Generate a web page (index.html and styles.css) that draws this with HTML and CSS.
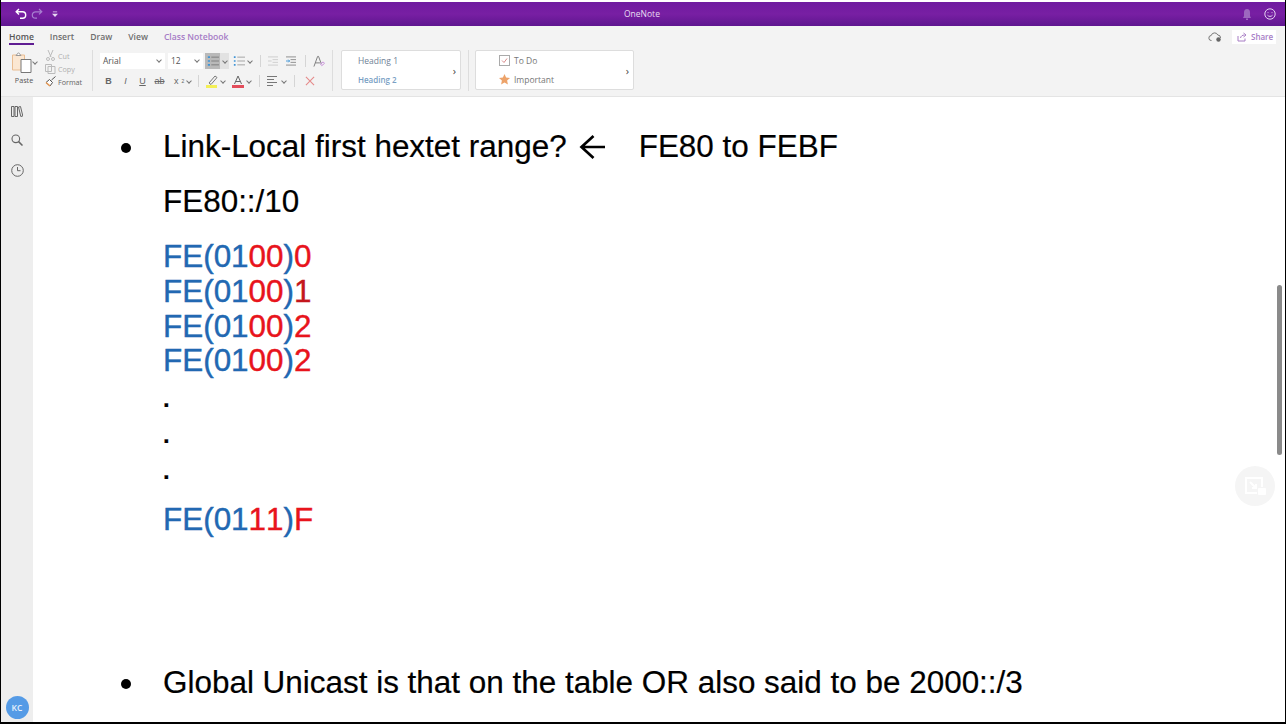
FILE: index.html
```html
<!DOCTYPE html>
<html lang="en">
<head>
    <meta charset="UTF-8">
    <title>OneNote</title>
    <link rel="stylesheet" href="styles.css">
</head>
<body>
    <div class="app">
        <header class="titlebar">
            <div class="quick">
                <svg width="12" height="12" viewBox="0 0 12 12" fill="none" stroke="#fff" stroke-width="1.4"><path d="M4 1 1.200 3.800 4 6.400M1.400 3.800H7.500a3.200 3.200 0 0 1 0 6.400H5"/></svg>
                <svg width="12" height="12" viewBox="0 0 12 12" fill="none" stroke="#a77fd0" stroke-width="1.2"><path d="M8 1l2.800 2.800L8 6.400M10.600 3.800H4.500a3.200 3.200 0 0 0 0 6.400H6"/></svg>
                <svg class="quick-more" width="6" height="7" viewBox="0 0 7 7" fill="#e6d8f2"><path d="M1 0h5v1H1zM0 2.500h7L3.500 6.500z"/></svg>
            </div>
            <div class="app-name">OneNote</div>
            <div class="title-right">
                <svg width="10" height="11" viewBox="0 0 10 11" fill="#9d68bf"><path d="M5 0C3 0 2 1.500 2 3.500V7L1 9h8L8 7V3.500C8 1.500 7 0 5 0zM4 9.500h2V11H4z"/></svg>
                <svg width="12" height="12" viewBox="0 0 12 12" fill="none" stroke="#e3d2ef" stroke-width="1"><circle cx="6" cy="6" r="5.200"/><path d="M3.500 7.200c1.200 1.600 3.800 1.600 5 0M4 4.300v.8M8 4.300v.8"/></svg>
            </div>
        </header>

        <div class="tabs">
            <nav class="tab-list">
                <span class="tab tab-active">Home</span>
                <span class="tab">Insert</span>
                <span class="tab">Draw</span>
                <span class="tab">View</span>
                <span class="tab tab-class">Class Notebook</span>
            </nav>
            <div class="tab-tools">
                <svg width="14" height="10" viewBox="0 0 14 10" fill="none" stroke="#777"><path d="M3.500 8.500a2.500 2.500 0 0 1-.3-5 3.500 3.500 0 0 1 6.600-.5 2.800 2.800 0 0 1 2.700 3"/><circle cx="10.500" cy="7.500" r="2.200" fill="#666" stroke="none"/></svg>
                <div class="share">
                    <svg width="10" height="10" viewBox="0 0 10 10" fill="none" stroke="#a77cc4"><path d="M1 4v5h7V6.500M3.500 6c.4-2 2-3 4-3M6.500 1l2.500 2-2.500 2"/></svg>
                    Share
                </div>
            </div>
        </div>

        <div class="ribbon">
            <section class="group group-clip">
                <div class="paste">
                    <div class="paste-top">
                        <svg width="20" height="21" viewBox="0 0 20 21" fill="none"><path d="M.5 3h12v15H.5z" fill="#fbe7d2" stroke="#e9bd92"/><path d="M4 3.500 6.500.7 9 3.500z" fill="#fff" stroke="#999"/><path d="M9 7.500h10v13H9z" fill="#fff" stroke="#777"/></svg>
                        <i class="caret"></i>
                    </div>
                    <span>Paste</span>
                </div>
                <div class="clip-list">
                    <div class="clip-item clip-off">
                        <svg width="11" height="11" viewBox="0 0 11 11" fill="none" stroke="#bbb"><path d="M3 0l3 7M8 0 5 7"/><circle cx="3" cy="9" r="1.500"/><circle cx="8" cy="9" r="1.500"/></svg>
                        Cut
                    </div>
                    <div class="clip-item clip-off">
                        <svg width="11" height="11" viewBox="0 0 11 11" fill="none" stroke="#bbb"><path d="M.5 1.500h6v7h-6zM3 3.500h7v7H3z"/></svg>
                        Copy
                    </div>
                    <div class="clip-item">
                        <svg width="11" height="11" viewBox="0 0 11 11" fill="none" stroke="#555"><path d="M6.500 4 10.500.500"/><path d="M1 6.500 4.500 3.500 7.500 6.500 5 10z" fill="#fff"/><path d="M1 6.500 5 10" stroke="#e89b55" stroke-width="1.500"/></svg>
                        Format
                    </div>
                </div>
            </section>

            <section class="group group-text">
                <div class="text-row">
                    <div class="select select-font">Arial<i class="caret"></i></div>
                    <div class="select select-size">12<i class="caret"></i></div>
                    <div class="btn-pair btn-pair-on">
                        <span class="list-btn btn-on">
                            <svg width="12" height="12" viewBox="0 0 14 12" fill="none" stroke="#777"><path d="M5 1.500h9M5 6h9M5 10.500h9"/><path d="M1 1.500h2.500M1 6h2.500M1 10.500h2.500" stroke="#3f94d6" stroke-width="2"/></svg>
                        </span>
                        <i class="caret"></i>
                    </div>
                    <div class="btn-pair">
                        <span class="list-btn list-btn-plain">
                            <svg width="12" height="12" viewBox="0 0 14 12" fill="none" stroke="#999"><path d="M5 1.500h9M5 6h9M5 10.500h9"/><path d="M1 1.500h2M1 6h2M1 10.500h2" stroke="#3f94d6" stroke-width="2"/></svg>
                        </span>
                        <i class="caret"></i>
                    </div>
                    <i class="thin-sep"></i>
                    <svg class="indent" width="10" height="10" viewBox="0 0 11 10" fill="none" stroke="#ccc"><path d="M0 .5h11M5 3.500h6M5 6.500h6M0 9.500h11M4 5H0"/></svg>
                    <svg class="indent" width="10" height="10" viewBox="0 0 11 10" fill="none" stroke="#888"><path d="M0 .5h11M5 3.500h6M5 6.500h6M0 9.500h11"/><path d="M0 5h4M2.500 3.500 4 5 2.500 6.500" stroke="#3f94d6"/></svg>
                    <i class="thin-sep"></i>
                    <svg width="12" height="13" viewBox="0 0 13 13" fill="none" stroke="#777"><path d="M1 12 5 1h1l3 8M2.500 8h5"/><path d="M8 9l3-2 1.500 1.500-3 2.500z" stroke="#c48ad8"/></svg>
                </div>
                <div class="text-row">
                    <b class="fmt">B</b>
                    <i class="fmt">I</i>
                    <u class="fmt">U</u>
                    <s class="fmt">ab</s>
                    <span class="fmt fmt-sub">x<sub>2</sub><i class="caret"></i></span>
                    <i class="thin-sep"></i>
                    <span class="color-btn">
                        <svg width="12" height="13" viewBox="0 0 12 13" fill="none" stroke="#777"><path d="M3 8l6-7 2 1.500L5 9.500z"/><path d="M0 11.500h11" stroke="#f3ef56" stroke-width="3"/></svg>
                        <i class="caret"></i>
                    </span>
                    <span class="color-btn">
                        <svg width="12" height="13" viewBox="0 0 12 13" fill="none" stroke="#666"><path d="M2.500 9 6 1l3.500 8M4 6.500h4"/><path d="M0 11.500h12" stroke="#e34d5b" stroke-width="3"/></svg>
                        <i class="caret"></i>
                    </span>
                    <i class="thin-sep"></i>
                    <span class="color-btn color-btn-wide">
                        <svg width="11" height="10" viewBox="0 0 11 10" fill="none" stroke="#777"><path d="M0 .5h10M0 3.500h7M0 6.500h10M0 9.500h6"/></svg>
                        <i class="caret"></i>
                    </span>
                    <i class="thin-sep"></i>
                    <svg class="del" width="10" height="10" viewBox="0 0 11 11" fill="none" stroke="#e58a8a" stroke-width="1.200"><path d="M1 1l9 9M10 1l-9 9"/></svg>
                </div>
            </section>

            <section class="style-box style-headings">
                <div class="style-lines">
                    <span class="h1-sample">Heading 1</span>
                    <span class="h2-sample">Heading 2</span>
                </div>
                <span class="chev">›</span>
            </section>
            <i class="group-sep"></i>
            <section class="style-box style-tags">
                <div class="style-lines">
                    <span class="tag-line">
                        <svg width="11" height="11" viewBox="0 0 11 11" fill="none"><rect x=".5" y=".5" width="10" height="10" stroke="#aaa"/><path d="M3 5.500l2 2 3-4" stroke="#d98a8a"/></svg>
                        To Do
                    </span>
                    <span class="tag-line">
                        <svg width="11" height="11" viewBox="0 0 11 11" fill="#eda36a"><path d="M5.500 0l1.600 3.600 3.900.4-2.900 2.600.8 3.900-3.400-2-3.400 2 .8-3.900L0 4l3.900-.4z"/></svg>
                        Important
                    </span>
                </div>
                <span class="chev">›</span>
            </section>
        </div>

        <div class="workspace">
            <aside class="sidebar">
                <div class="side-icons">
                    <svg width="12" height="11" viewBox="0 0 12 11" fill="none" stroke="#666"><path d="M.5.500h2.500v10H.5zM4 .500h2.500v10H4zM7.500 1l2-.5 2.300 9.500-2 .5z"/></svg>
                    <svg width="12" height="12" viewBox="0 0 12 12" fill="none" stroke="#666" stroke-width="1.100"><circle cx="4.800" cy="4.800" r="3.800"/><path d="M7.600 7.600 11.500 11.500" stroke-width="1.500"/></svg>
                    <svg class="clock" width="13" height="13" viewBox="0 0 13 13" fill="none" stroke="#666"><circle cx="6.500" cy="6.500" r="5.800"/><path d="M6.500 3v3.700h3"/></svg>
                </div>
                <div class="avatar">KC</div>
            </aside>

            <main class="page">
                <ul class="note-list">
                    <li class="note-head">
                        <span>Link-Local first hextet range?</span>
                        <svg class="arrow" width="26" height="24" viewBox="0 0 26 24" fill="none" stroke="#000" stroke-width="2.700"><path d="M26 12H2.500M14.500 1 2.500 12 14.500 23"/></svg>
                        <span>FE80 to FEBF</span>
                    </li>
                </ul>
                <p class="prefix">FE80::/10</p>
                <div class="hex-block">
                    <p class="hex"><span class="blue">FE(01</span><span class="red">00</span><span class="blue">)</span><span class="red">0</span></p>
                    <p class="hex"><span class="blue">FE(01</span><span class="red">00</span><span class="blue">)</span><span class="dark-red">1</span></p>
                    <p class="hex"><span class="blue">FE(01</span><span class="red">00</span><span class="blue">)</span><span class="red">2</span></p>
                    <p class="hex hex-b"><span class="blue">FE(01</span><span class="red">00</span><span class="blue">)</span><span class="red">2</span></p>
                </div>
                <div class="dots">
                    <p>.</p>
                    <p>.</p>
                    <p>.</p>
                </div>
                <p class="hex hex-last"><span class="blue">FE(01</span><span class="red">11</span><span class="blue">)</span><span class="red">F</span></p>
                <ul class="note-list note-list-low">
                    <li>Global Unicast is that on the table OR also said to be 2000::/3</li>
                </ul>
            </main>
        </div>

        <div class="scroll-thumb"></div>
        <div class="float-btn">
            <svg width="22" height="20" viewBox="0 0 22 20" fill="none" stroke="#fff" stroke-width="2"><path d="M13 17H2V2h16v9"/><path d="M6 6l6 6M12 8v4H8"/><rect x="14" y="12" width="8" height="7" rx="1" fill="#fff" stroke="none"/></svg>
        </div>
    </div>
</body>
</html>
```

FILE: styles.css
```css
* { box-sizing: border-box; }
body {
    margin: 0;
    background: #000;
    font-family: 'Open Sans', sans-serif;
    overflow: hidden;
}
p { margin: 0; }
.app {
    position: relative;
    width: 1284px;
    height: 722px;
    margin-left: 1px;
    padding-top: 2px;
    display: flex;
    flex-direction: column;
    overflow: hidden;
    background: #fff;
}

/* title bar */
.titlebar {
    height: 24px;
    flex: none;
    display: flex;
    align-items: center;
    justify-content: space-between;
    padding: 0 9px 0 14px;
    position: relative;
    background: linear-gradient(#6f1ba0, #781fa3 50%, #5f1690);
    color: #e8dcf1;
    font-size: 8.5px;
}
.quick { display: flex; align-items: center; gap: 4px; }
.quick-more { margin-left: 5px; }
.app-name { position: absolute; left: 623px; top: 6px; }
.title-right { display: flex; align-items: center; gap: 12px; }

/* tabs */
.tabs {
    height: 21px;
    flex: none;
    display: flex;
    justify-content: space-between;
    align-items: center;
    padding: 0 9px 0 8px;
    background: #f3f3f3;
}
.tab-list { display: flex; gap: 16px; height: 100%; padding-top: 4px; }
.tab { font-size: 8.6px; font-weight: 600; color: #6e6e6e; height: 15px; line-height: 14px; }
.tab-active { color: #555; border-bottom: 2px solid #5f1d92; }
.tab-class { color: #a67cc6; }
.tab-tools { display: flex; align-items: center; gap: 10px; }
.share {
    display: flex;
    align-items: center;
    gap: 4px;
    width: 44px;
    height: 14px;
    padding-left: 5px;
    background: #fff;
    color: #a67cc6;
    font-size: 8px;
    font-weight: 600;
}

/* ribbon */
.ribbon {
    height: 50px;
    flex: none;
    display: flex;
    align-items: flex-start;
    padding-top: 3px;
    background: #f3f3f3;
    border-bottom: 1px solid #e4e4e4;
}
.group { display: flex; height: 41px; border-right: 1px solid #ddd; }
.group-clip { width: 92px; padding-left: 11px; gap: 9px; }
.paste {
    width: 24px;
    font-size: 7.2px;
    color: #555;
    display: flex;
    flex-direction: column;
    align-items: center;
    gap: 2px;
    padding-top: 1px;
}
.paste-top { display: flex; align-items: center; gap: 1px; height: 22px; }
.clip-list {
    display: flex;
    flex-direction: column;
    gap: 2px;
    font-size: 7.2px;
    color: #666;
}
.clip-item { display: flex; align-items: center; gap: 2px; height: 11px; }
.clip-off { color: #b0b0b0; }
.group-text { width: 240px; padding: 3px 0 0 7px; flex-direction: column; gap: 4px; }
.text-row { display: flex; align-items: center; height: 16px; }
.select {
    background: #fff;
    height: 16px;
    font-size: 8.5px;
    line-height: 16px;
    padding-left: 3px;
    color: #555;
    position: relative;
    margin-right: 3px;
}
.select-font { width: 65px; }
.select-size { width: 35px; margin-right: 2px; }
.caret {
    display: inline-block;
    width: 4px;
    height: 4px;
    border-right: 1px solid #777;
    border-bottom: 1px solid #777;
    transform: rotate(45deg);
}
.select .caret { position: absolute; right: 4px; top: 5px; }
.btn-pair { display: flex; align-items: center; gap: 2px; margin-right: 7px; }
.btn-pair-on { background: #e2e2e2; width: 24px; gap: 3px; margin-right: 3px; }
.list-btn { display: flex; align-items: center; justify-content: center; width: 15px; height: 16px; }
.list-btn-plain { width: 14px; }
.btn-on { background: #b9b9b9; }
.thin-sep { width: 1px; height: 12px; background: #d5d5d5; margin: 0 7px 0 1px; flex: none; }
.indent { margin-right: 8px; }
.fmt {
    width: 17px;
    font-family: 'Liberation Sans', sans-serif;
    font-size: 9px;
    color: #666;
    text-align: center;
}
.fmt-sub { width: 26px; display: flex; align-items: center; gap: 3px; padding-left: 6px; margin-right: 3px; }
.fmt-sub sub { font-size: 5px; }
.color-btn { display: flex; align-items: center; gap: 3px; margin-right: 7px; }
.color-btn-wide { gap: 4px; }
.del { margin-left: 3px; }
.style-box {
    height: 40px;
    display: flex;
    align-items: center;
    background: #fff;
    border: 1px solid #ddd;
    border-radius: 2px;
}
.style-headings { width: 120px; margin-left: 8px; padding-left: 16px; }
.style-tags { width: 159px; padding-left: 23px; }
.group-sep { width: 1px; height: 41px; background: #ddd; margin: 0 6px 0 7px; }
.style-lines { display: flex; flex-direction: column; justify-content: space-between; height: 30px; flex: 1; }
.h1-sample { font-size: 8.5px; color: #6f8296; }
.h2-sample { font-size: 8px; font-weight: 600; color: #79a0c4; }
.tag-line { display: flex; align-items: center; gap: 4px; font-size: 8.5px; color: #777; }
.chev { font-size: 11px; color: #444; margin-right: 4px; }

/* left rail and page */
.workspace { flex: 1; display: flex; min-height: 0; }
.sidebar {
    width: 32px;
    flex: none;
    display: flex;
    flex-direction: column;
    justify-content: space-between;
    align-items: center;
    background: #eeeeee;
    padding: 9px 0 3px;
}
.side-icons { display: flex; flex-direction: column; align-items: center; gap: 17px; }
.clock { margin-top: 1px; }
.avatar {
    width: 23px;
    height: 23px;
    border-radius: 50%;
    background: #559be6;
    color: #e6f1fc;
    font-size: 8.5px;
    font-weight: 600;
    text-align: center;
    line-height: 23px;
}
.page {
    flex: 1;
    background: #fff;
    padding: 28px 0 0 130px;
    font-family: 'Liberation Sans', sans-serif;
    font-size: 31.45px;
    font-kerning: none;
    line-height: 44px;
    color: #000;
    -webkit-text-stroke: 0.2px currentColor;
}
.note-list { margin: 0; padding: 0; list-style: none; }
.note-list li { position: relative; white-space: nowrap; }
.note-list li::before {
    content: "";
    position: absolute;
    left: -42px;
    top: 18px;
    width: 10px;
    height: 10px;
    border-radius: 50%;
    background: #000;
}
.note-head { display: flex; align-items: center; }
.arrow { margin: 0 34px 0 12px; }
.prefix { margin-top: 11px; }
.hex-block { margin-top: 15px; }
.hex { line-height: 35px; -webkit-text-stroke: 0.4px currentColor; }
.hex-b { margin-top: -1px; }
.blue { color: #2268b2; }
.red { color: #e8141c; }
.dark-red { color: #c4161c; }
.dots { margin-top: 3px; }
.dots p { line-height: 36px; font-weight: 700; font-size: 24px; }
.hex-last { margin-top: 13px; }
.note-list-low { margin-top: 124px; }

/* things floating over the page */
.scroll-thumb {
    position: absolute;
    right: 3px;
    top: 285px;
    width: 5px;
    height: 170px;
    border-radius: 3px;
    background: #8a8a8a;
}
.float-btn {
    position: absolute;
    left: 1234px;
    top: 466px;
    width: 40px;
    height: 40px;
    border-radius: 50%;
    background: #f5f5f5;
    display: flex;
    align-items: center;
    justify-content: center;
}
```
